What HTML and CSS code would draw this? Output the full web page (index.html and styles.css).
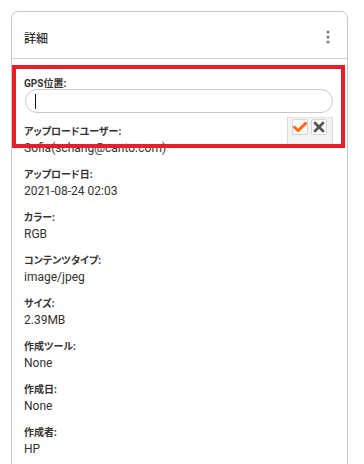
FILE: index.html
```html
<!DOCTYPE html>
<html lang="ja">
<head>
    <meta charset="utf-8"/>
    <meta name="viewport" content="width=device-width, initial-scale=1.0"/>
    <title>詳細</title>
    <link rel="stylesheet" href="styles.css">
</head>
<body>
<div class="panel">
    <div class="panel-header">
        <span class="panel-title">詳細</span>
        <span class="more-icon">
            <svg width="4" height="14" viewBox="0 0 4 14">
                <circle cx="2" cy="2" r="1.5" fill="#7a7a7a"/>
                <circle cx="2" cy="7" r="1.5" fill="#7a7a7a"/>
                <circle cx="2" cy="12" r="1.5" fill="#7a7a7a"/>
            </svg>
        </span>
    </div>

    <div class="panel-body">
        <div class="field field-edit">
            <div class="field-label">GPS位置:</div>
            <div class="text-input"><span class="caret"></span></div>
            <div class="edit-actions">
                <button class="edit-btn ok">
                    <svg width="14" height="14" viewBox="0 0 14 14">
                        <path d="M1.5 7.2 L5.2 10.6 L12.6 3.4" fill="none" stroke="#ff6a13" stroke-width="2.9" stroke-linecap="round" stroke-linejoin="round"/>
                    </svg>
                </button>
                <button class="edit-btn cancel">
                    <svg width="14" height="14" viewBox="0 0 14 14">
                        <path d="M3 3 L11 11 M11 3 L3 11" fill="none" stroke="#555" stroke-width="2.8" stroke-linecap="round"/>
                    </svg>
                </button>
            </div>
        </div>

        <div class="field">
            <div class="field-label">アップロードユーザー:</div>
            <div class="field-value">Sofia(schang@canto.com)</div>
        </div>
        <div class="field">
            <div class="field-label">アップロード日:</div>
            <div class="field-value">2021-08-24 02:03</div>
        </div>
        <div class="field">
            <div class="field-label">カラー:</div>
            <div class="field-value">RGB</div>
        </div>
        <div class="field">
            <div class="field-label">コンテンツタイプ:</div>
            <div class="field-value">image/jpeg</div>
        </div>
        <div class="field">
            <div class="field-label">サイズ:</div>
            <div class="field-value">2.39MB</div>
        </div>
        <div class="field">
            <div class="field-label">作成ツール:</div>
            <div class="field-value">None</div>
        </div>
        <div class="field">
            <div class="field-label">作成日:</div>
            <div class="field-value">None</div>
        </div>
        <div class="field">
            <div class="field-label">作成者:</div>
            <div class="field-value">HP</div>
        </div>
    </div>

    <!-- annotation box -->
    <div class="highlight"></div>
</div>
</body>
</html>
```

FILE: styles.css
```css
html {
    overflow: hidden;
}

body {
    margin: 0;
    padding: 11px;
    background-color: #fff;
    font-family: Roboto, "Noto Sans CJK JP", sans-serif;
    color: #333;
}

.panel {
    position: relative;
    width: 337px;
    box-sizing: border-box;
    border: 1px solid #c9c9c9;
    border-radius: 7px;
    background-color: #fff;
}

.panel-header {
    display: flex;
    align-items: center;
    justify-content: space-between;
    height: 47px;
    padding: 4px 17px 0 12px;
    box-sizing: border-box;
    border-bottom: 1px solid #d0d0d0;
}

.panel-title {
    font-family: "Noto Sans CJK JP", sans-serif;
    font-size: 12px;
    font-weight: 500;
    color: #333;
}

.more-icon {
    display: flex;
}

.panel-body {
    padding: 18px 14px 20px 12px;
}

.field {
    margin-bottom: 11px;
}

.field-label {
    font-size: 10px;
    line-height: 13px;
    font-weight: bold;
    color: #333;
    font-feature-settings: "palt";
    margin-bottom: 2px;
}

.field-value {
    font-size: 12px;
    line-height: 17px;
    color: #333;
}

.field-edit {
    position: relative;
    margin-bottom: 12px;
}

.field-edit .field-label {
    margin-bottom: -1px;
}

.text-input {
    display: flex;
    align-items: center;
    height: 24px;
    margin-left: 1px;
    padding-left: 9px;
    box-sizing: border-box;
    border: 1px solid #c8c8c8;
    border-radius: 12px;
    background-color: #fff;
}

.caret {
    width: 1px;
    height: 15px;
    background-color: #111;
}

.edit-actions {
    position: absolute;
    right: 0;
    top: 40px;
    display: flex;
    gap: 3px;
    padding: 1px 5px 10px 4px;
    background-color: #f3f3f3;
    border: 1px solid #dcdcdc;
    border-top-color: #e4e4e4;
}

.edit-btn {
    display: flex;
    align-items: center;
    justify-content: center;
    width: 16px;
    height: 16px;
    padding: 0;
    border: 1px solid #d6d6d6;
    border-radius: 2px;
    background-color: #f9f9f9;
}

.highlight {
    position: absolute;
    left: 0;
    top: 53px;
    width: 333px;
    height: 83px;
    box-sizing: border-box;
    border: 4px solid #e6202a;
    pointer-events: none;
}
```
